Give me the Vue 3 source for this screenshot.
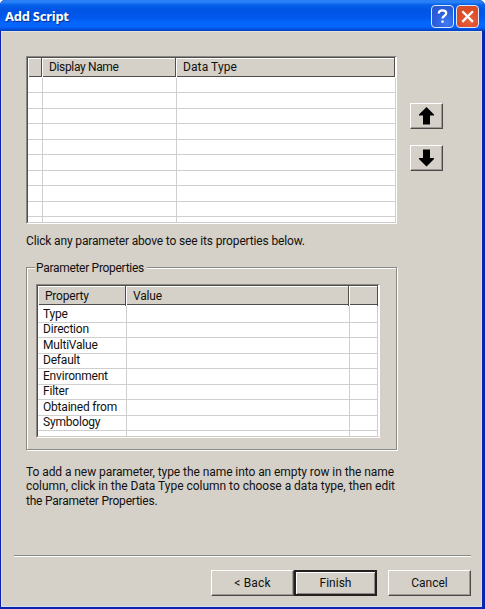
<script setup>
const emptyRows = Array.from({ length: 10 }, (_, i) => i)
const properties = ['Type', 'Direction', 'MultiValue', 'Default', 'Environment', 'Filter', 'Obtained from', 'Symbology', '']
</script>

<template>
  <div class="window">
    <header class="titlebar">
      <h1 class="title">Add Script</h1>
      <button class="sys help" aria-label="Help">
        <svg width="19" height="19" viewBox="0 0 19 19"><path d="M5.800 6.600C5.800 4.200 7.300 3.300 9.300 3.300c2.300 0 3.900 1.100 3.900 2.900 0 2.600-3.700 2.800-3.700 5.400M9.500 13.400v2.300" fill="none" stroke="#fff" stroke-width="2.300" /></svg>
      </button>
      <button class="sys close" aria-label="Close">
        <svg width="19" height="19" viewBox="0 0 19 19"><path d="M4.300 4.300l10.600 10.600M14.900 4.300L4.300 14.900" fill="none" stroke="#fff" stroke-width="2.300" /></svg>
      </button>
    </header>
    <main class="body">
      <div class="top">
        <div class="grid params">
          <div class="row head"><span></span><span class="t-name">Display Name</span><span class="t-type">Data Type</span></div>
          <div class="rows">
            <div v-for="r in emptyRows" :key="r" class="row"><span></span><span></span><span></span></div>
          </div>
        </div>
        <div class="arrows">
          <button class="btn arrow" aria-label="Move up">
            <svg width="15" height="18" viewBox="0 0 15 18"><path d="M7.500 0L15 7.500V8.500H11V17.500H4V8.500H0V7.500Z" /></svg>
          </button>
          <button class="btn arrow" aria-label="Move down">
            <svg width="15" height="18" viewBox="0 0 15 18"><path d="M7.500 17.500L15 10V9H11V0.500H4V9H0V10Z" /></svg>
          </button>
        </div>
      </div>
      <p class="hint">Click any parameter above to see its properties below.</p>
      <section class="group">
        <h2 class="legend">Parameter Properties</h2>
        <div class="grid props">
          <div class="row head"><span class="t-prop">Property</span><span class="t-value">Value</span><span></span></div>
          <div class="rows">
            <div v-for="p in properties" :key="p" class="row"><span>{{ p }}</span><span></span><span></span></div>
          </div>
        </div>
      </section>
      <p class="note">
        <span class="l1">To add a new parameter, type the name into an empty row in the name</span><br>
        <span class="l2">column, click in the Data Type column to choose a data type, then edit</span><br>
        <span class="l3">the Parameter Properties.</span>
      </p>
      <hr class="rule">
      <footer class="actions">
        <button class="btn back">&lt; Back</button>
        <button class="btn default">Finish</button>
        <button class="btn cancel">Cancel</button>
      </footer>
    </main>
  </div>
</template>

<style>
body { background: #fff; overflow: hidden; }
</style>

<style scoped>
* { box-sizing: border-box; }
.window {
  width: 485px;
  height: 609px;
  background: #0a24b0;
  border-radius: 5px 6px 0 0;
  overflow: hidden;
  font-family: Roboto, "Liberation Sans", sans-serif;
  font-size: 12px;
  color: #111;
}
h1, h2, p { margin: 0; font-weight: 400; }
button { font: inherit; color: inherit; padding: 0; margin: 0; border-radius: 0; }
svg { display: block; }
.titlebar {
  height: 31px;
  display: flex;
  align-items: center;
  gap: 2px;
  padding: 1px 6px 0 5px;
  background: linear-gradient(#2a7df2 0, #2a83fa 2px, #0660ea 5px, #0054e3 10px, #0058ec 17px, #0566fd 23px, #0565fc 27px, #0148cf 30px, #0540b8 31px);
}
.title {
  flex: 1;
  font: bold 13px/16px "Noto Sans", sans-serif;
  letter-spacing: -0.25px;
  color: #fff;
  text-shadow: 1px 1px 1px #0a2f91;
}
.sys {
  width: 23px;
  height: 23px;
  border: 1px solid #dce8fb;
  border-radius: 4px;
  display: grid;
  place-items: center;
}
.help { background: radial-gradient(circle at 70% 80%, #3d7af0, #2a5fdd 50%, #2755cf); }
.close { background: radial-gradient(circle at 60% 70%, #e9603c, #dc4a26 60%, #d1502f); }
.body {
  height: 576px;
  margin: 0 3px 0 1px;
  padding: 24px 10px 0 24px;
  background: #d5d0c8;
  border: 1px solid #d3def0;
  border-top-color: #e2e2e0;
  display: flex;
  flex-direction: column;
}
.top { display: flex; gap: 13px; }
.grid {
  background: #fff;
  border: 1px solid #8b8783;
  border-right-color: #fff;
  border-bottom-color: #fff;
  display: flex;
  flex-direction: column;
  overflow: hidden;
}
.params { width: 371px; height: 168px; --cols: 16px 134px 1fr; --head: 14px 134px 1fr; }
.props { width: 344px; height: 154px; --cols: 90px 223px 28px; --head: 88px 223px 1fr; }
.row {
  display: grid;
  grid-template-columns: var(--cols);
  height: 15.45px;
  flex: none;
}
.row span {
  border-right: 1px solid #cfcfcf;
  border-bottom: 1px solid #cfcfcf;
  line-height: 16px;
  white-space: nowrap;
  padding-left: 6px;
  letter-spacing: -0.2px;
}
.row.head {
  grid-template-columns: var(--head);
  height: 20px;
  margin-right: 1px;
  border: 1px solid #514d4b;
  border-right: 0;
  background: #d5d0c8;
}
.row.head span {
  border: 0 solid #514d4b;
  border-right-width: 1px;
  box-shadow: inset 1px 1px #fff;
  line-height: 19px;
  padding-left: 7px;
}
.props .row.head span { line-height: 20px; }
.row.head .t-name { letter-spacing: -0.35px; }
.row.head .t-type { letter-spacing: 0.1px; }
.rows { flex: 1; overflow: hidden; border-left: 1px solid #514d4b; border-bottom: 1px solid #d0cdc8; padding-top: 1px; }
.rows .row { margin-left: -1px; }
.rows .row span:first-child { margin-left: 1px; padding-left: 5px; }
.arrows { display: flex; flex-direction: column; gap: 16px; padding-top: 47px; }
.btn {
  width: 83px;
  height: 26px;
  background: #d5d0c8;
  border: 1px solid #fff;
  border-right-color: #4c4948;
  border-bottom-color: #4c4948;
  box-shadow: inset -1px -1px #9c9894;
  display: grid;
  place-items: center;
}
.arrow { width: 33px; }
.hint { margin-top: 9px; line-height: 16px; letter-spacing: -0.15px; }
.group {
  width: 371px;
  height: 183px;
  margin-top: 18px;
  padding: 0 0 0 9px;
  border: 1px solid #8b8985;
  box-shadow: 1px 1px #fff, inset 1px 1px #fff;
}
.legend {
  width: 112px;
  height: 16px;
  margin: -8px 0 8px -1px;
  padding-left: 1px;
  background: #d5d0c8;
  font-size: 12px;
  line-height: 16px;
  letter-spacing: -0.3px;
  white-space: nowrap;
}
.note { margin-top: 15px; line-height: 14.3px; white-space: nowrap; }
.l1 { letter-spacing: -0.07px; }
.l2 { letter-spacing: -0.02px; }
.l3 { letter-spacing: -0.22px; }
.rule { width: 457px; height: 2px; margin: 47px 0 0 -12px; border: 0; border-top: 1px solid #8b8985; border-bottom: 1px solid #fff; flex: none; }
.actions { display: flex; justify-content: flex-end; margin-top: 13px; }
.back { letter-spacing: 0.2px; }
.default { border: 2px solid #252020; box-shadow: inset 1px 1px #fff, inset -1px -1px #8b8985; }
.cancel { margin-left: 11px; }
</style>
